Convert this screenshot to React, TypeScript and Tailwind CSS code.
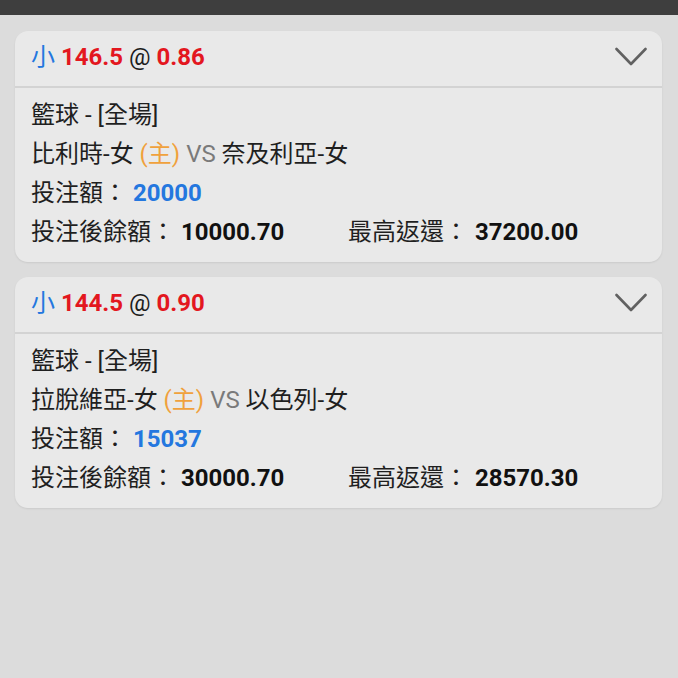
import { useState } from 'react'

interface Bet {
  line: string
  odds: string
  home: string
  away: string
  stake: string
  balance: string
  payout: string
}

const bets: Bet[] = [
  {
    line: '146.5',
    odds: '0.86',
    home: '比利時-女',
    away: '奈及利亞-女',
    stake: '20000',
    balance: '10000.70',
    payout: '37200.00',
  },
  {
    line: '144.5',
    odds: '0.90',
    home: '拉脫維亞-女',
    away: '以色列-女',
    stake: '15037',
    balance: '30000.70',
    payout: '28570.30',
  },
]

function Chevron() {
  return (
    <svg width="32" height="20" viewBox="0 0 32 20" fill="none">
      <path d="M1.5 2 L16 17 L30.5 2" stroke="#616161" strokeWidth="2.6" strokeLinecap="round" strokeLinejoin="round" />
    </svg>
  )
}

function BetCard({ bet }: { bet: Bet }) {
  const [open, setOpen] = useState(true)

  return (
    <div className="rounded-[13px] bg-[#e9e9e9] shadow-[0_1px_2px_rgba(0,0,0,0.08)]">
      <button
        onClick={() => setOpen(!open)}
        className="flex h-[57px] w-full items-center justify-between border-b-2 border-[#d3d3d3] pb-[3px] pl-4 pr-[15px] text-left"
      >
        <span className="text-[24px] leading-none">
          <span className="text-[#2477df]">小</span>{' '}
          <span className="font-bold text-[#e3171f]">{bet.line}</span>{' '}
          <span className="text-[#1c1c1c]">@</span>{' '}
          <span className="font-bold text-[#e3171f]">{bet.odds}</span>
        </span>
        <Chevron />
      </button>
      {open && (
        <div className="px-4 pb-[10px] pt-[8px] text-[24px] leading-[39px] text-[#1f1f1f]">
          <div>籃球 - [全場]</div>
          <div>
            {bet.home} <span className="text-[#f0a13c]">(主)</span>{' '}
            <span className="text-[#7a7a7a]">VS</span> {bet.away}
          </div>
          <div>
            投注額：<span className="ml-[6px] font-bold text-[#2477df]">{bet.stake}</span>
          </div>
          <div className="flex">
            <div className="w-[317px]">
              投注後餘額：<span className="ml-[6px] font-bold text-[#111]">{bet.balance}</span>
            </div>
            <div>
              最高返還：<span className="ml-[7px] font-bold text-[#111]">{bet.payout}</span>
            </div>
          </div>
        </div>
      )}
    </div>
  )
}

export default function App() {
  return (
    <div
      className="min-h-[678px] bg-[#dcdcdc]"
      style={{ fontFamily: 'Roboto, "Noto Sans CJK TC", sans-serif' }}
    >
      <div className="h-[15px] bg-[#3e3e3e]" />
      <div className="flex flex-col gap-[15px] pl-[15px] pr-4 pt-4">
        {bets.map((bet) => (
          <BetCard key={bet.line} bet={bet} />
        ))}
      </div>
    </div>
  )
}
